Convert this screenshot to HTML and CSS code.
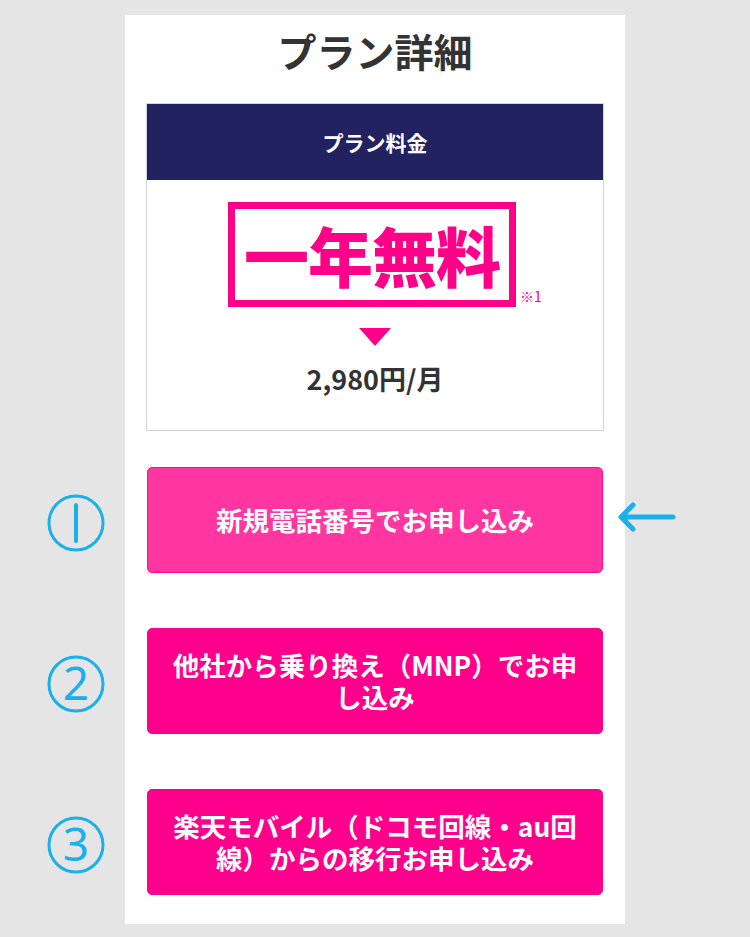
FILE: index.html
```html
<!DOCTYPE html>
<html lang="ja">
<head>
    <meta charset="UTF-8">
    <meta name="viewport" content="width=device-width, initial-scale=1.0">
    <title>プラン詳細</title>
    <link rel="stylesheet" href="styles.css">
</head>
<body>
    <div class="page">
        <!-- Titre -->
        <div class="row">
            <div class="side"></div>
            <div class="main title-cell">
                <h1>プラン詳細</h1>
            </div>
            <div class="side"></div>
        </div>

        <!-- Carte du tarif -->
        <div class="row">
            <div class="side"></div>
            <div class="main card-cell">
                <div class="plan-card">
                    <div class="plan-head">プラン料金</div>
                    <div class="plan-body">
                        <div class="free-box">
                            一年無料
                            <span class="note">※1</span>
                        </div>
                        <div class="down-arrow"></div>
                        <p class="price">2,980円/月</p>
                    </div>
                </div>
            </div>
            <div class="side"></div>
        </div>

        <!-- Boutons d'inscription -->
        <div class="row">
            <div class="side marker">
                <svg width="60" height="60" viewBox="0 0 60 60">
                    <circle cx="30" cy="30" r="27" fill="none" stroke="#1ab1ea" stroke-width="3"/>
                    <line x1="30" y1="12" x2="30" y2="48" stroke="#1ab1ea" stroke-width="4" stroke-linecap="round"/>
                </svg>
            </div>
            <div class="main btn-cell">
                <a href="#" class="apply-btn light">新規電話番号でお申し込み</a>
            </div>
            <div class="side pointer">
                <svg width="60" height="32" viewBox="0 0 60 32">
                    <path d="M56 16 H4 M16 4 L4 16 L16 28" fill="none" stroke="#1ab1ea" stroke-width="5" stroke-linecap="round" stroke-linejoin="round"/>
                </svg>
            </div>
        </div>

        <div class="row">
            <div class="side marker">
                <svg width="60" height="60" viewBox="0 0 60 60">
                    <circle cx="30" cy="30" r="27" fill="none" stroke="#1ab1ea" stroke-width="3"/>
                    <text x="30" y="46" text-anchor="middle" font-family="Noto Sans" font-size="46" fill="#1ab1ea">2</text>
                </svg>
            </div>
            <div class="main btn-cell">
                <a href="#" class="apply-btn">他社から乗り換え（MNP）でお申し込み</a>
            </div>
            <div class="side"></div>
        </div>

        <div class="row last">
            <div class="side marker">
                <svg width="60" height="60" viewBox="0 0 60 60">
                    <circle cx="30" cy="30" r="27" fill="none" stroke="#1ab1ea" stroke-width="3"/>
                    <text x="30" y="46" text-anchor="middle" font-family="Noto Sans" font-size="46" fill="#1ab1ea">3</text>
                </svg>
            </div>
            <div class="main btn-cell">
                <a href="#" class="apply-btn">楽天モバイル（ドコモ回線・au回線）からの移行お申し込み</a>
            </div>
            <div class="side"></div>
        </div>
    </div>
</body>
</html>
```

FILE: styles.css
```css
/* Fond gris et police japonaise */
body {
    font-family: "Noto Sans CJK JP", "Noto Sans", sans-serif;
    margin: 0;
    padding: 0;
    background-color: #e5e5e5;
    color: #333333;
}

.page {
    padding-top: 15px;
}

/* Chaque ligne : marge gauche, colonne blanche, marge droite */
.row {
    display: grid;
    grid-template-columns: 125px 500px 125px;
}

.main {
    background-color: #ffffff;
    padding: 0 21px;
}

.side {
    display: flex;
    align-items: flex-start;
}

.title-cell {
    padding-top: 13px;
    padding-bottom: 31px;
}

h1 {
    margin: 0;
    font-size: 39px;
    line-height: 44px;
    font-weight: 700;
    text-align: center;
    color: #333333;
}

.card-cell {
    padding-bottom: 36px;
}

/* Carte du tarif */
.plan-card {
    border: 1px solid #d3d3e2;
}

.plan-head {
    height: 76px;
    background-color: #232260;
    color: #ffffff;
    font-size: 21px;
    font-weight: 700;
    display: flex;
    align-items: center;
    justify-content: center;
}

.plan-body {
    padding: 22px 0 33px;
    display: flex;
    flex-direction: column;
    align-items: center;
}

.free-box {
    position: relative;
    box-sizing: border-box;
    width: 288px;
    height: 105px;
    margin-left: -6px;
    border: 7px solid #ff0088;
    color: #ff0088;
    font-size: 65px;
    font-weight: 900;
    line-height: 91px;
    text-align: center;
    letter-spacing: -1px;
}

.note {
    position: absolute;
    left: calc(100% + 11px);
    bottom: -5px;
    font-size: 14px;
    font-weight: 400;
    line-height: 18px;
    letter-spacing: 0;
    white-space: nowrap;
}

.down-arrow {
    margin-top: 21px;
    width: 0;
    height: 0;
    border-left: 16.5px solid transparent;
    border-right: 16.5px solid transparent;
    border-top: 18px solid #ff0088;
}

.price {
    margin: 15px 0 0;
    font-size: 27px;
    font-weight: 700;
    line-height: 36px;
    color: #333333;
}

/* Boutons */
.btn-cell {
    padding-bottom: 55px;
}

.row.last .btn-cell {
    padding-bottom: 29px;
}

.apply-btn {
    box-sizing: border-box;
    height: 106px;
    margin: 0 1px;
    padding: 0 18px;
    display: flex;
    align-items: center;
    justify-content: center;
    text-align: center;
    background-color: #ff008c;
    border: 1px solid #ff008c;
    border-radius: 5px;
    color: #ffffff;
    font-size: 26.5px;
    font-weight: 700;
    line-height: 32px;
    text-decoration: none;
}

.apply-btn.light {
    background-color: #ff35a1;
    border-color: #ff0a8e;
}

/* Repères numérotés et flèche */
.marker {
    padding-left: 46px;
    padding-top: 26px;
}

.marker svg {
    overflow: visible;
}

.pointer {
    margin-left: -8px;
    padding-top: 34px;
}
```
